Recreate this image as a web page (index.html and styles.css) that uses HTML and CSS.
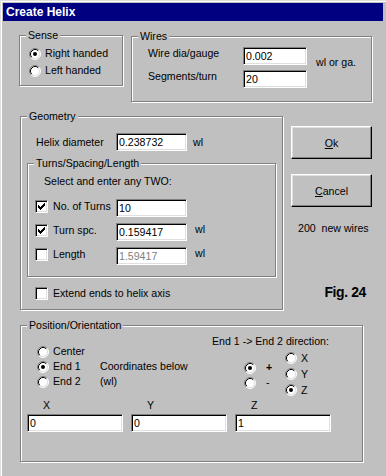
FILE: index.html
```html
<!doctype html>
<html>
<head>
<meta charset="UTF-8">
<title>Create Helix</title>
<link rel="stylesheet" href="styles.css">
</head>
<body>

<div class="window">
   <div class="titlebar">Create Helix</div>

   <div class="row-top">
      <div class="group sense">
         <div class="legend">Sense</div>
         <div class="radio-row first"><svg class="radio"><use href="#radio-on"/></svg><span>Right handed</span></div>
         <div class="radio-row"><svg class="radio"><use href="#radio-off"/></svg><span>Left handed</span></div>
      </div>

      <div class="group wires">
         <div class="legend">Wires</div>
         <div class="wires-body">
            <div class="wires-fields">
               <div class="field-row"><span class="wire-label">Wire dia/gauge</span><input class="field wire-input" value="0.002"></div>
               <div class="field-row second"><span class="wire-label">Segments/turn</span><input class="field wire-input" value="20"></div>
            </div>
            <span class="wires-unit">wl or ga.</span>
         </div>
      </div>
   </div>

   <div class="row-mid">
      <div class="group geometry">
         <div class="legend">Geometry</div>
         <div class="helix-row">
            <span class="helix-label">Helix diameter</span>
            <input class="field short" value="0.238732">
            <span class="helix-unit">wl</span>
         </div>

         <div class="group turns">
            <div class="legend">Turns/Spacing/Length</div>
            <div class="hint">Select and enter any TWO:</div>
            <div class="check-row first">
               <span class="check"><svg class="tick"><use href="#tick"/></svg></span>
               <span class="check-label">No. of Turns</span>
               <input class="field short" value="10">
            </div>
            <div class="check-row">
               <span class="check"><svg class="tick"><use href="#tick"/></svg></span>
               <span class="check-label">Turn spc.</span>
               <input class="field short" value="0.159417">
               <span class="row-unit">wl</span>
            </div>
            <div class="check-row">
               <span class="check"></span>
               <span class="check-label">Length</span>
               <input class="field short" value="1.59417" disabled>
               <span class="row-unit">wl</span>
            </div>
         </div>

         <div class="check-row extend">
            <span class="check"></span>
            <span class="check-label">Extend ends to helix axis</span>
         </div>
      </div>

      <div class="side">
         <button class="btn"><u>O</u>k</button>
         <button class="btn second"><u>C</u>ancel</button>
         <div class="wire-count">200&nbsp;&nbsp;new wires</div>
         <div class="fig">Fig. 24</div>
      </div>
   </div>

   <div class="group position">
      <div class="legend">Position/Orientation</div>
      <div class="pos-top">
         <div class="origin">
            <div class="pos-row"><svg class="radio"><use href="#radio-off"/></svg><span>Center</span></div>
            <div class="pos-row"><svg class="radio"><use href="#radio-on"/></svg><span>End 1</span></div>
            <div class="pos-row"><svg class="radio"><use href="#radio-off"/></svg><span>End 2</span></div>
         </div>
         <div class="coords-note">
            <div class="pos-row">Coordinates below</div>
            <div class="pos-row">(wl)</div>
         </div>
         <div class="direction">
            <div class="dir-title">End 1 -&gt; End 2 direction:</div>
            <div class="dir-options">
               <div class="sign-col">
                  <div class="pos-row"><svg class="radio"><use href="#radio-on"/></svg><span class="sign plus">+</span></div>
                  <div class="pos-row"><svg class="radio"><use href="#radio-off"/></svg><span class="sign">-</span></div>
               </div>
               <div class="axis-col">
                  <div class="axis-row"><svg class="radio"><use href="#radio-off"/></svg><span>X</span></div>
                  <div class="axis-row"><svg class="radio"><use href="#radio-off"/></svg><span>Y</span></div>
                  <div class="axis-row"><svg class="radio"><use href="#radio-on"/></svg><span>Z</span></div>
               </div>
            </div>
         </div>
      </div>
      <div class="coord-grid">
         <span class="coord-label">X</span>
         <span class="coord-label">Y</span>
         <span class="coord-label">Z</span>
         <input class="field coord" value="0">
         <input class="field coord" value="0">
         <input class="field coord" value="1">
      </div>
   </div>
</div>

<!-- shared glyphs -->
<svg class="defs">
   <symbol id="radio-off" viewBox="0 0 12 12">
      <circle cx="6" cy="6" r="5" fill="#fff"/>
      <path d="M2.11 9.89A5.5 5.5 0 0 1 9.89 2.11" stroke="#808080" fill="none"/>
      <path d="M9.89 2.11A5.5 5.5 0 0 1 2.11 9.89" stroke="#fff" fill="none"/>
      <path d="M2.82 9.18A4.5 4.5 0 0 1 9.18 2.82" stroke="#000" fill="none"/>
      <path d="M9.18 2.82A4.5 4.5 0 0 1 2.82 9.18" stroke="#dfdfdf" fill="none"/>
   </symbol>
   <symbol id="radio-on" viewBox="0 0 12 12">
      <use href="#radio-off"/>
      <circle cx="6" cy="6" r="2" fill="#000"/>
   </symbol>
   <symbol id="tick" viewBox="0 0 7 7">
      <path shape-rendering="crispEdges" fill="#000" d="M0 2h1v3H0z M1 3h1v3H1z M2 4h1v3H2z M3 3h1v3H3z M4 2h1v3H4z M5 1h1v3H5z M6 0h1v3H6z"/>
   </symbol>
</svg>

</body>
</html>
```

FILE: styles.css
```css
body {
   margin: 0;
   background: #c0c0c0;
   color: #000;
   font-family: "Liberation Sans", Arial, sans-serif;
   font-size: 10.6px;
   line-height: 13px;
}

.window {
   box-sizing: border-box;
   width: 386px;
   height: 476px;
   padding: 3px;
   box-shadow: inset 1px 1px 0 #dfdfdf, inset 2px 2px 0 #fff;
}

.titlebar {
   height: 18px;
   line-height: 18px;
   padding-left: 3px;
   background: #000080;
   color: #fff;
   font-weight: bold;
   font-size: 12px;
}

/* etched group boxes */
.group {
   box-sizing: border-box;
   border: 1px solid #808080;
   box-shadow: inset 1px 1px 0 #fff, 1px 1px 0 #fff;
}

.legend {
   width: fit-content;
   height: 13px;
   margin: -7px 0 0 6px;
   padding: 0 2px;
   background: #c0c0c0;
}

.radio {
   flex: none;
   width: 12px;
   height: 12px;
   margin-right: 4px;
}

.check {
   box-sizing: border-box;
   flex: none;
   display: flex;
   align-items: center;
   justify-content: center;
   width: 13px;
   height: 13px;
   margin: 1px 5px 0 0;
   background: #fff;
   border: 1px solid;
   border-color: #808080 #fff #fff #808080;
   box-shadow: inset 1px 1px 0 #000, inset -1px -1px 0 #dfdfdf;
}

.tick {
   width: 7px;
   height: 7px;
}

.field {
   box-sizing: border-box;
   height: 18px;
   margin: 0;
   padding: 0 2px;
   background: #fff;
   color: #000;
   font-family: inherit;
   font-size: 10.6px;
   border: 1px solid;
   border-color: #808080 #fff #fff #808080;
   box-shadow: inset 1px 1px 0 #000, inset -1px -1px 0 #dfdfdf;
   outline: none;
}

.field:disabled {
   color: #808080;
   -webkit-text-fill-color: #808080;
   background: #fff;
   opacity: 1;
}

/* top row */
.row-top {
   display: flex;
   align-items: flex-start;
   margin-top: 14px;
}

.sense {
   width: 104px;
   height: 51px;
   margin-left: 16px;
}

.radio-row {
   display: flex;
   align-items: center;
   height: 17px;
   padding-left: 9px;
}

.radio-row.first {
   margin-top: 3px;
}

.wires {
   width: 241px;
   height: 66px;
   margin: 1px 0 0 8px;
}

.wires-body {
   display: flex;
   margin: 4px 0 0 16px;
}

.field-row {
   display: flex;
   height: 18px;
}

.field-row.second {
   margin-top: 5px;
}

.wire-label {
   width: 95px;
}

.wire-input {
   width: 64px;
}

.wires-unit {
   margin: 9px 0 0 9px;
}

/* middle row */
.row-mid {
   display: flex;
   align-items: flex-start;
   margin-top: 14px;
}

.geometry {
   width: 263px;
   height: 194px;
   margin-left: 17px;
}

.helix-row {
   display: flex;
   align-items: center;
   height: 18px;
   margin: 10px 0 0 15px;
}

.helix-label {
   width: 80px;
}

.short {
   width: 71px;
}

.helix-unit {
   margin-left: 6px;
}

.turns {
   width: 249px;
   height: 114px;
   margin: 12px 0 0 6px;
}

.hint {
   margin: 5px 0 0 16px;
}

.check-row {
   display: flex;
   align-items: flex-start;
   height: 18px;
   margin: 6px 0 0 7px;
}

.check-row.first {
   margin-top: 11px;
}

.check-label {
   width: 63px;
   margin-top: 1px;
   white-space: nowrap;
}

.row-unit {
   margin-left: 8px;
}

.check-row.extend {
   margin: 9px 0 0 14px;
}

.side {
   width: 81px;
   margin: 10px 0 0 8px;
}

.btn {
   box-sizing: border-box;
   display: block;
   width: 81px;
   height: 33px;
   padding: 0;
   background: #c0c0c0;
   color: #000;
   font-family: inherit;
   font-size: 10.6px;
   border: 1px solid;
   border-color: #fff #000 #000 #fff;
   box-shadow: inset -1px -1px 0 #808080, inset 1px 1px 0 #dfdfdf;
}

.btn.second {
   margin-top: 15px;
}

.wire-count {
   margin-top: 15px;
   padding-left: 7px;
   white-space: nowrap;
}

.fig {
   margin-top: 49px;
   padding-right: 6px;
   text-align: right;
   font-weight: bold;
   font-size: 14px;
   line-height: 16px;
   letter-spacing: -0.4px;
}

/* position / orientation */
.position {
   width: 343px;
   height: 137px;
   margin: 15px 0 0 17px;
}

.pos-top {
   display: flex;
   align-items: flex-start;
}

.pos-row {
   display: flex;
   align-items: center;
   height: 15px;
   white-space: nowrap;
}

.origin {
   width: 63px;
   margin: 12px 0 0 16px;
}

.coords-note {
   width: 112px;
   margin-top: 27px;
}

.direction {
   margin-top: 3px;
}

.dir-options {
   display: flex;
   align-items: flex-start;
   margin-left: 32px;
}

.sign-col {
   width: 41px;
   margin-top: 12px;
}

.sign {
   margin-left: 6px;
}

.sign.plus {
   font-weight: bold;
}

.axis-col {
   margin-top: 2px;
}

.axis-row {
   display: flex;
   align-items: center;
   height: 16px;
}

.coord-grid {
   display: grid;
   grid-template-columns: repeat(3, 96px);
   column-gap: 8px;
   row-gap: 2px;
   margin: 1px 0 0 6px;
}

.coord-label {
   padding-left: 16px;
}

.coord {
   width: 96px;
}

.defs {
   display: block;
   width: 0;
   height: 0;
   overflow: hidden;
}
```
